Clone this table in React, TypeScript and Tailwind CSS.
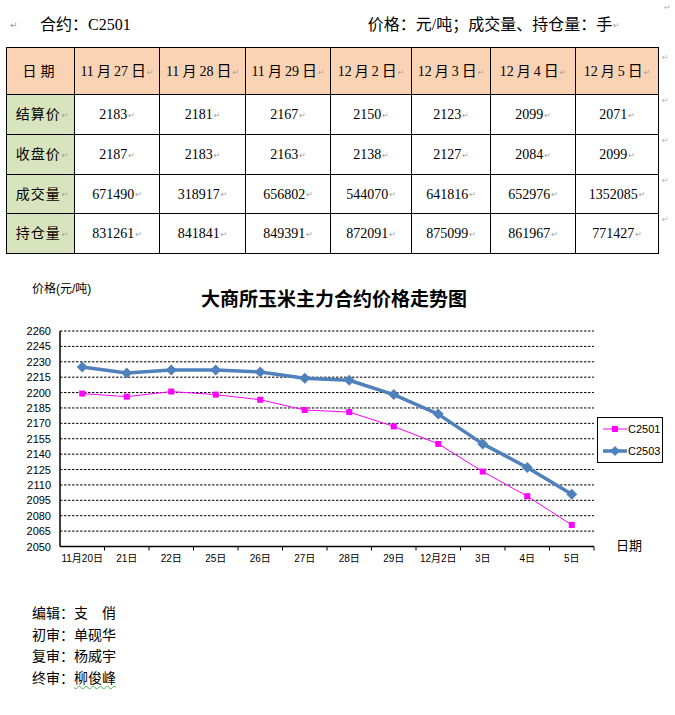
import * as React from "react"

const dates = ["11", "27", "11", "28", "11", "29", "12", "2", "12", "3", "12", "4", "12", "5"]
const headers = [0, 1, 2, 3, 4, 5, 6].map((i) => [dates[i * 2], dates[i * 2 + 1]])

const rows = [
  { label: "结算价", values: ["2183", "2181", "2167", "2150", "2123", "2099", "2071"] },
  { label: "收盘价", values: ["2187", "2183", "2163", "2138", "2127", "2084", "2099"] },
  { label: "成交量", values: ["671490", "318917", "656802", "544070", "641816", "652976", "1352085"] },
  { label: "持仓量", values: ["831261", "841841", "849391", "872091", "875099", "861967", "771427"] },
]

const colWidths = ["w-[68px]", "w-[85px]", "w-[86px]", "w-[85px]", "w-[81px]", "w-[79px]", "w-[85px]", "w-[83px]"]
const rowHeights = ["h-[40px]", "h-[40px]", "h-[39px]", "h-[40px]"]

const categories = ["11月20日", "21日", "22日", "25日", "26日", "27日", "28日", "29日", "12月2日", "3日", "4日", "5日"]
const c2501 = [2199, 2196, 2201, 2198, 2193, 2183, 2181, 2167, 2150, 2123, 2099, 2071]
const c2503 = [2225, 2219, 2222, 2222, 2220, 2214, 2212, 2198, 2179, 2150, 2127, 2101]

const X0 = 60
const X1 = 594
const Y0 = 330
const Y1 = 545.5
const step = (X1 - X0) / categories.length
const xOf = (i: number) => X0 + step * (i + 0.5)
const yOf = (v: number) => Y0 + ((2260 - v) / 210) * (Y1 - Y0)
const levels = Array.from({ length: 15 }, (_, i) => 2260 - i * 15)

function Mark() {
  return <span className="ml-[1px] align-middle text-[8px] text-[#a0a0a0] [font-family:'DejaVu_Sans',sans-serif]">↵</span>
}

function Chart() {
  const pts = (data: number[]) => data.map((v, i) => `${xOf(i)},${yOf(v)}`).join(" ")
  return (
    <svg width={675} height={345} className="block">
      <g transform="translate(0,-253)" fontFamily="'Liberation Sans','Noto Sans CJK SC',sans-serif">
        <text x={32} y={292} fontSize={12} fill="#000">价格(元/吨)</text>
        <text x={334} y={305} fontSize={19} fontWeight={700} textAnchor="middle" fill="#000">
          大商所玉米主力合约价格走势图
        </text>

        {levels.slice(0, 14).map((v) => (
          <line key={v} x1={X0} x2={X1} y1={yOf(v)} y2={yOf(v)} stroke="#000" strokeWidth={1} strokeDasharray="2.5 1.5" />
        ))}
        {levels.map((v) => (
          <text key={v} x={51} y={yOf(v) + 4} fontSize={11} textAnchor="end" fill="#000">
            {v}
          </text>
        ))}
        <line x1={X0} x2={X0} y1={Y0} y2={Y1} stroke="#000" strokeWidth={1.5} />
        <line x1={X0} x2={X1} y1={Y1} y2={Y1} stroke="#000" strokeWidth={1.5} />
        {categories.map((_, i) => (
          <line key={i} x1={X0 + step * (i + 1)} x2={X0 + step * (i + 1)} y1={Y1} y2={Y1 + 4} stroke="#000" strokeWidth={1} />
        ))}
        {categories.map((c, i) => (
          <text key={c} x={xOf(i)} y={561} fontSize={10} textAnchor="middle" fill="#000">
            {c}
          </text>
        ))}
        <text x={616} y={549} fontSize={13} fill="#000">日期</text>

        {/* C2501 */}
        <polyline points={pts(c2501)} fill="none" stroke="#ff00ff" strokeWidth={1} />
        {c2501.map((v, i) => (
          <rect key={i} x={xOf(i) - 3} y={yOf(v) - 3} width={6} height={6} fill="#ff00ff" />
        ))}

        {/* C2503 */}
        <polyline points={pts(c2503)} fill="none" stroke="#4f81bd" strokeWidth={3.5} strokeLinejoin="round" />
        {c2503.map((v, i) => (
          <polygon
            key={i}
            points={`${xOf(i)},${yOf(v) - 5.5} ${xOf(i) + 5.5},${yOf(v)} ${xOf(i)},${yOf(v) + 5.5} ${xOf(i) - 5.5},${yOf(v)}`}
            fill="#4f81bd"
          />
        ))}

        {/* legend */}
        <rect x={597.5} y={416.5} width={65} height={45} fill="#fff" stroke="#000" strokeWidth={1} />
        <line x1={603} x2={627} y1={428} y2={428} stroke="#ff00ff" strokeWidth={1} />
        <rect x={612} y={425} width={6} height={6} fill="#ff00ff" />
        <text x={628} y={432} fontSize={11} fill="#000">C2501</text>
        <line x1={603} x2={627} y1={450} y2={450} stroke="#4f81bd" strokeWidth={3.5} />
        <polygon points="615,445 620,450 615,455 610,450" fill="#4f81bd" />
        <text x={628} y={454} fontSize={11} fill="#000">C2503</text>
      </g>
    </svg>
  )
}

export default function App() {
  return (
    <div className="relative h-[715px] w-[675px] overflow-hidden bg-white text-black [font-family:'Liberation_Serif','Noto_Sans_CJK_SC',serif]">
      <span className="absolute right-[4px] top-[2px] text-[8px] text-[#b0b0b0] [font-family:'DejaVu_Sans',sans-serif]">↵</span>

      {/* heading line */}
      <div className="flex h-[47px] items-start pt-[16px] text-[16px] leading-[18px]">
        <span className="ml-[10px] w-[30px] text-[9px] text-[#9a9a9a] [font-family:'DejaVu_Sans',sans-serif]">↵</span>
        <span>合约：C2501</span>
        <span className="ml-[237px]">
          价格：元/吨；成交量、持仓量：手
          <Mark />
        </span>
      </div>

      {/* data table */}
      <div className="flex">
        <table className="ml-[6px] border-collapse text-[14px]">
          <thead>
            <tr className="h-[47px] bg-[#f9d3b4]">
              <th className={`${colWidths[0]} border border-black p-0 font-normal tracking-[4px]`}>日期</th>
              {headers.map(([m, d], i) => (
                <th key={i} className={`${colWidths[i + 1]} border border-black p-0 text-center font-normal`}>
                  {m}
                  <span className="mx-[3px]">月</span>
                  {d}
                  <span className="ml-[3px] text-[15px]">日</span>
                  <Mark />
                </th>
              ))}
            </tr>
          </thead>
          <tbody>
            {rows.map((r, ri) => (
              <tr key={r.label} className={rowHeights[ri]}>
                <td className="border border-black bg-[#d7e4bd] p-0 pl-[4px] text-center text-[14px] tracking-[1px]">
                  {r.label}
                  <Mark />
                </td>
                {r.values.map((v, i) => (
                  <td key={i} className="border border-black p-0 text-center">
                    {v}
                    <Mark />
                  </td>
                ))}
              </tr>
            ))}
          </tbody>
        </table>
        <div className="ml-[3px] flex flex-col text-[8px] leading-[9px] text-[#b0b0b0] [font-family:'DejaVu_Sans',sans-serif]">
          <span className="h-[47px] pt-[6px]">↵</span>
          <span className="h-[40px] pt-[2px]">↵</span>
          <span className="h-[40px] pt-[2px]">↵</span>
          <span className="h-[39px] pt-[2px]">↵</span>
          <span className="h-[40px] pt-[2px]">↵</span>
        </div>
      </div>

      <Chart />

      {/* reviewers */}
      <div className="mt-[3px] pl-[32px] text-[14px] leading-[21.5px] [font-family:'Noto_Sans_CJK_SC',sans-serif]">
        <div>编辑：支　俏</div>
        <div>初审：单砚华</div>
        <div>复审：杨威宇</div>
        <div>
          终审：<span className="underline decoration-[#4caf50] decoration-wavy decoration-1 underline-offset-2">柳俊峰</span>
        </div>
      </div>
    </div>
  )
}
